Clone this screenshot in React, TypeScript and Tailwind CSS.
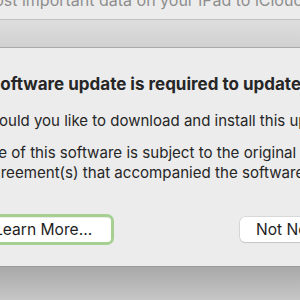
import React from "react";

const App = () => {
  return (
    <div className="w-[300px] h-[300px] overflow-hidden bg-[#ececec] font-['Inter',sans-serif] flex flex-col">
      {/* window behind the sheet */}
      <div className="h-[19px] overflow-hidden shrink-0">
        <p className="mt-[-11px] ml-[-114px] whitespace-nowrap text-[16px] leading-[22px] text-[#8e8e8e]">
          Back up the most important data on your iPad to iCloud
        </p>
      </div>
      <div className="h-px bg-[#c2c2c2] shrink-0" />
      <div className="h-[27px] bg-gradient-to-b from-[#dedede] to-[#d0d0d0] shrink-0" />
      <div className="h-px bg-[#a9a9a9] shrink-0" />

      {/* sheet */}
      <div className="h-[218px] shrink-0 bg-[#ececec] pt-[26px] text-[#262626] whitespace-nowrap">
        <h1 className="ml-[-26px] text-[17px] leading-[20px] font-bold">
          A software update is required to update your iPad.
        </h1>
        <p className="mt-[17px] ml-[-15px] text-[15px] leading-[20px]">
          Would you like to download and install this update now?
        </p>
        <p className="mt-[12px] ml-[-21px] text-[15.1px] leading-[20px]">
          Use of this software is subject to the original Software License
        </p>
        <p className="ml-[-19px] text-[15.1px] leading-[20px]">
          Agreement(s) that accompanied the software being updated.
        </p>
        <div className="mt-[31px] flex items-center">
          <div className="rounded-[7px] border-[3px] border-[#a6d091] ml-[-40px] shrink-0">
            <button className="h-[24px] w-[148px] bg-white rounded-[4px] text-[15.6px] text-[#1e1e1e] pl-[31px] text-left">
              Learn More...
            </button>
          </div>
          <button className="ml-[126px] h-[25px] w-[100px] shrink-0 bg-white rounded-[5px] shadow-[0_0_0_0.5px_#c4c4c4,0_1px_1px_rgba(0,0,0,0.15)] text-[15.6px] text-[#1e1e1e] pl-[16px] text-left">
            Not Now
          </button>
        </div>
      </div>

      <div className="h-px bg-[#9a9a9a] shrink-0" />
      <div className="flex-1 bg-gradient-to-b from-[#a9a9a9] to-[#c6c6c6]" />
    </div>
  );
};

export default App;
